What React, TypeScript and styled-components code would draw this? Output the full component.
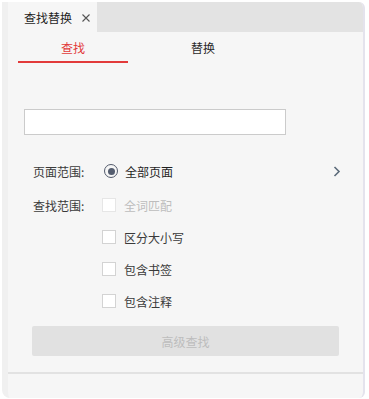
import React from "react";
import styled, { createGlobalStyle } from "styled-components";

const Global = createGlobalStyle`
  html, body { margin: 0; padding: 0; background: #ffffff; }
  body { padding: 2px 0 0 2px; font-family: "Noto Sans CJK SC", "Noto Sans", sans-serif; font-size: 12px; }
  * { box-sizing: border-box; }
`;

const Panel = styled.div`
  width: 363px;
  height: 396px;
  background: #f6f6f6;
  border-left: 6px solid #f0f0f0;
  border-right: 2px solid #e4e3ed;
  border-radius: 0 6px 6px 8px;
  display: flex;
  flex-direction: column;
  overflow: hidden;
`;

const TabBar = styled.div`
  height: 30px;
  background: #e3e3e3;
  display: flex;
  align-items: stretch;
`;

const DocTab = styled.div`
  width: 89px;
  background: #f6f6f6;
  display: flex;
  align-items: center;
  padding-left: 16px;
  gap: 10px;
  color: #1e1e1e;
  font-size: 12px;
`;

const CloseIcon = styled.svg`
  width: 8px;
  height: 8px;
  margin-top: 1px;
`;

const SubTabs = styled.div`
  height: 32px;
  display: flex;
  gap: 20px;
  padding-left: 10px;
`;

const SubTab = styled.div<{ $active?: boolean }>`
  width: 110px;
  height: 31px;
  display: flex;
  align-items: center;
  justify-content: center;
  padding-top: 1px;
  font-size: 12px;
  color: ${(p) => (p.$active ? "#e23a3a" : "#2a2a2a")};
  border-bottom: 2px solid ${(p) => (p.$active ? "#e23a3a" : "transparent")};
`;

const SearchInput = styled.input`
  margin: 45px 0 0 16px;
  width: 262px;
  height: 26px;
  border: 1px solid #cbcbcb;
  background: #fff;
  outline: none;
  padding: 0 6px;
  font-family: inherit;
`;

const Form = styled.div`
  margin-top: 20px;
  padding-left: 25px;
  padding-right: 16px;
  display: flex;
  flex-direction: column;
`;

const Row = styled.div<{ $gapAfter?: number }>`
  height: 32px;
  display: flex;
  align-items: center;
  margin-bottom: ${(p) => p.$gapAfter ?? 0}px;
`;

const Label = styled.div`
  width: 69px;
  color: #3a3a3a;
  font-size: 12px;
`;

const Radio = styled.span`
  width: 14px;
  height: 14px;
  margin-left: 2px;
  border-radius: 50%;
  border: 1.5px solid #525a6b;
  display: flex;
  align-items: center;
  justify-content: center;
  &::after {
    content: "";
    width: 7px;
    height: 7px;
    border-radius: 50%;
    background: #545d6f;
  }
`;

const Check = styled.span<{ $disabled?: boolean }>`
  width: 14px;
  height: 14px;
  border: 1px solid ${(p) => (p.$disabled ? "#e6e6e6" : "#d3d3d3")};
  background: #fff;
`;

const OptText = styled.span<{ $disabled?: boolean; $strong?: boolean }>`
  margin-left: ${(p) => (p.$strong ? 7 : 8)}px;
  font-size: 12px;
  color: ${(p) => (p.$disabled ? "#bdbdbd" : p.$strong ? "#1f1f1f" : "#3a3a3a")};
`;

const Chevron = styled.svg`
  margin-left: auto;
  margin-right: 6px;
  width: 8px;
  height: 11px;
`;

const AdvButton = styled.button`
  margin: 9px 0 0 24px;
  width: 307px;
  height: 30px;
  border: none;
  border-radius: 2px;
  background: #e1e1e1;
  color: #bdbdbd;
  font-family: inherit;
  font-size: 12px;
  padding: 0;
`;

const Divider = styled.div`
  margin-top: 16px;
  height: 2px;
  background: #e2e2e2;
`;

const Spacer = styled.div`
  flex: 1;
`;

export default function App() {
  const checks: { text: string }[] = [
    { text: "区分大小写" },
    { text: "包含书签" },
    { text: "包含注释" },
  ];
  return (
    <>
      <Global />
      <Panel>
        <TabBar>
          <DocTab>
            <span>查找替换</span>
            <CloseIcon viewBox="0 0 8 8">
              <path d="M0.5 0.5 L7.5 7.5 M7.5 0.5 L0.5 7.5" stroke="#555" strokeWidth="1.1" fill="none" />
            </CloseIcon>
          </DocTab>
        </TabBar>
        <SubTabs>
          <SubTab $active>查找</SubTab>
          <SubTab>替换</SubTab>
        </SubTabs>
        <SearchInput />
        <Form>
          <Row $gapAfter={2}>
            <Label>页面范围:</Label>
            <Radio />
            <OptText $strong>全部页面</OptText>
            <Chevron viewBox="0 0 8 11">
              <path d="M1.5 1 L6 5.5 L1.5 10" stroke="#5c6b7a" strokeWidth="1.6" fill="none" />
            </Chevron>
          </Row>
          <Row>
            <Label>查找范围:</Label>
            <Check $disabled />
            <OptText $disabled>全词匹配</OptText>
          </Row>
          {checks.map((c) => (
            <Row key={c.text}>
              <Label />
              <Check />
              <OptText>{c.text}</OptText>
            </Row>
          ))}
        </Form>
        <AdvButton>高级查找</AdvButton>
        <Divider />
        <Spacer />
      </Panel>
    </>
  );
}
